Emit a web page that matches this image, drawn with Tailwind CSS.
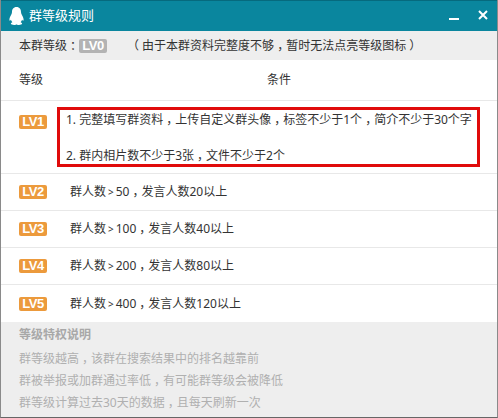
<!DOCTYPE html>
<html>
<head>
  <meta charset="UTF-8">
  <title>群等级规则</title>
  <script src="https://cdn.jsdelivr.net/npm/@tailwindcss/browser@4"></script>
</head>
<body class="w-[498px] h-[418px] overflow-hidden bg-white font-['Noto_Sans','Noto_Sans_CJK_SC',sans-serif] text-[12px] text-[#333]">
  <div class="h-[418px] flex flex-col border-x border-b border-x-[#8a8a8a] border-b-[#666]">

    <!-- Title bar -->
    <div class="h-[31px] shrink-0 flex items-center bg-[#0a869e] border-t border-[#066a7e] text-white">
      <svg class="ml-[8px] w-[15px] h-[18px]" viewBox="0 0 15 18">
        <path fill="#fff" d="M7.5 0C4.400 0 3 2.400 3 5c0 1-.2 1.700-.8 2.800C1.200 9.700.3 11.500.4 13c.1 1 .7 1 1.500-.2.300 1 .8 1.800 1.500 2.400-1 .4-1.600 1-1.500 1.600.2.800 2 1.200 3.600 1.100 1-.1 1.500-.5 2-.5s1 .4 2 .5c1.600.1 3.400-.3 3.600-1.100.1-.6-.5-1.200-1.500-1.600.7-.6 1.200-1.400 1.500-2.400.8 1.200 1.400 1.200 1.500.2.100-1.500-.8-3.300-1.800-5.200C12.200 6.700 12 6 12 5c0-2.600-1.400-5-4.500-5z"/>
      </svg>
      <span class="ml-[5px] text-[13px]">群等级规则</span>
      <div class="ml-auto mr-[9px] flex items-center gap-[19px]">
        <div class="w-[10px] h-[2px] bg-white mt-[6px]"></div>
        <svg class="w-[10px] h-[10px] mb-[2px]" viewBox="0 0 10 10">
          <path stroke="#fff" stroke-width="2" d="M1 1l8 8M9 1l-8 8"/>
        </svg>
      </div>
    </div>

    <!-- Current level -->
    <div class="h-[29px] shrink-0 flex items-center bg-[#eeeeee] pl-[18px] whitespace-nowrap">
      <span class="w-[60px]">本群等级<span class="pl-[3px] tracking-[-3px]">：</span></span>
      <span class="w-[28px] h-[14px] rounded-[2px] bg-[#b3b3b3] text-white font-bold text-[13px] tracking-[-0.5px] leading-[14px] text-center font-['Liberation_Sans',sans-serif]">LV0</span>
      <span class="ml-[20px]">（ 由于本群资料完整度不够<span class="pl-[3px] tracking-[-3px]">，</span>暂时无法点亮等级图标 ）</span>
    </div>

    <!-- Table head -->
    <div class="h-[41px] shrink-0 flex items-center pl-[18px] border-b border-[#e8e8e8]">
      <span class="w-[248px]">等级</span>
      <span>条件</span>
    </div>

    <!-- LV1 -->
    <div class="h-[73px] shrink-0 flex items-start pl-[18px] border-b border-[#e8e8e8]">
      <span class="mt-[14px] w-[28px] h-[14px] rounded-[2px] bg-[#ec9a3c] text-white font-bold text-[13px] tracking-[-0.5px] leading-[14px] text-center font-['Liberation_Sans',sans-serif]">LV1</span>
      <div class="ml-[10px] mt-[6px] w-[423px] h-[60px] border-[3px] border-[#e00b0b] pl-[6px] pt-[1px] leading-[18px]">
        <p class="whitespace-nowrap">1. 完整填写群资料<span class="pl-[3px] tracking-[-3px]">，</span>上传自定义群头像<span class="pl-[3px] tracking-[-3px]">，</span>标签不少于1个<span class="pl-[3px] tracking-[-3px]">，</span>简介不少于30个字</p>
        <p class="mt-[18px]">2. 群内相片数不少于3张<span class="pl-[3px] tracking-[-3px]">，</span>文件不少于2个</p>
      </div>
    </div>

    <!-- LV2 to LV5 -->
    <div class="h-[37px] shrink-0 flex items-center pl-[18px] border-b border-[#e8e8e8]">
      <span class="w-[28px] h-[14px] rounded-[2px] bg-[#ec9a3c] text-white font-bold text-[13px] tracking-[-0.5px] leading-[14px] text-center font-['Liberation_Sans',sans-serif]">LV2</span>
      <span class="ml-[23px]">群人数<span class="mx-[2px] text-[10px]">&gt;</span>50<span class="pl-[3px] tracking-[-3px]">，</span>发言人数20以上</span>
    </div>
    <div class="h-[37px] shrink-0 flex items-center pl-[18px] border-b border-[#e8e8e8]">
      <span class="w-[28px] h-[14px] rounded-[2px] bg-[#ec9a3c] text-white font-bold text-[13px] tracking-[-0.5px] leading-[14px] text-center font-['Liberation_Sans',sans-serif]">LV3</span>
      <span class="ml-[23px]">群人数<span class="mx-[2px] text-[10px]">&gt;</span>100<span class="pl-[3px] tracking-[-3px]">，</span>发言人数40以上</span>
    </div>
    <div class="h-[37px] shrink-0 flex items-center pl-[18px] border-b border-[#e8e8e8]">
      <span class="w-[28px] h-[14px] rounded-[2px] bg-[#ec9a3c] text-white font-bold text-[13px] tracking-[-0.5px] leading-[14px] text-center font-['Liberation_Sans',sans-serif]">LV4</span>
      <span class="ml-[23px]">群人数<span class="mx-[2px] text-[10px]">&gt;</span>200<span class="pl-[3px] tracking-[-3px]">，</span>发言人数80以上</span>
    </div>
    <div class="h-[37px] shrink-0 flex items-center pl-[18px]">
      <span class="w-[28px] h-[14px] rounded-[2px] bg-[#ec9a3c] text-white font-bold text-[13px] tracking-[-0.5px] leading-[14px] text-center font-['Liberation_Sans',sans-serif]">LV5</span>
      <span class="ml-[23px]">群人数<span class="mx-[2px] text-[10px]">&gt;</span>400<span class="pl-[3px] tracking-[-3px]">，</span>发言人数120以上</span>
    </div>

    <!-- Footer notes -->
    <div class="flex-1 bg-[#eeeeee] pl-[18px] pt-[2px] text-[#b0b0b0] leading-[22px]">
      <p class="font-bold text-[#a8a8a8] mb-[2px]">等级特权说明</p>
      <p>群等级越高<span class="pl-[3px] tracking-[-3px]">，</span>该群在搜索结果中的排名越靠前</p>
      <p>群被举报或加群通过率低<span class="pl-[3px] tracking-[-3px]">，</span>有可能群等级会被降低</p>
      <p>群等级计算过去30天的数据<span class="pl-[3px] tracking-[-3px]">，</span>且每天刷新一次</p>
    </div>
  </div>
</body>
</html>
